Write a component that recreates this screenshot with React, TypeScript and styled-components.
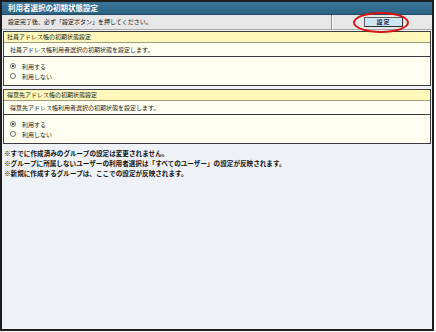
import styled, { createGlobalStyle } from "styled-components";

const GlobalStyle = createGlobalStyle`
  html, body {
    margin: 0;
    padding: 0;
    background: #ffffff;
  }
  body {
    font-family: "Noto Sans CJK JP", "Noto Sans", sans-serif;
  }
`;

const Frame = styled.div`
  box-sizing: border-box;
  width: 434px;
  height: 331px;
  border: 2px solid #1d1d1d;
  background-color: #eef1f5;
  display: flex;
  flex-direction: column;
`;

const TitleBar = styled.div`
  height: 12px;
  line-height: 12px;
  padding-left: 6px;
  background: linear-gradient(#3a7597, #2c6485);
  color: #ffffff;
  font-size: 7.5px;
  font-weight: bold;
  border-bottom: 1px solid #1f4a63;
`;

const NoticeRow = styled.div`
  position: relative;
  display: flex;
  height: 14px;
  background-color: #e7e7e7;
  border-bottom: 1px solid #a8a8a8;
`;

const NoticeText = styled.div`
  flex: 1;
  padding-left: 6px;
  line-height: 14px;
  font-size: 6px;
  color: #111111;
  border-right: 1px solid #8d8d8d;
`;

const ButtonCell = styled.div`
  width: 100px;
  display: flex;
  align-items: center;
  padding-left: 31px;
  box-sizing: border-box;
  border-left: 1px solid #ffffff;
`;

const SetButton = styled.button`
  width: 39px;
  height: 10px;
  padding: 0;
  background-color: #cfe7f3;
  border: 1px solid #2e2e2e;
  border-top-color: #5d5d5d;
  border-left-color: #5d5d5d;
  font-family: inherit;
  font-size: 6px;
  font-weight: bold;
  color: #14264a;
  letter-spacing: 1px;
  line-height: 8px;
`;

const RedRing = styled.div`
  position: absolute;
  left: 351px;
  top: -3px;
  width: 56px;
  height: 21px;
  box-sizing: border-box;
  border: 2px solid #d81414;
  border-radius: 50%;
`;

const Section = styled.div<{ $top: number }>`
  margin: ${(p) => p.$top}px 1px 0 1px;
  border: 1px solid #3c3c3c;
  background-color: #fffff2;
`;

const SectionHeader = styled.div`
  height: 10px;
  line-height: 10px;
  padding-left: 3px;
  background-color: #fff7bc;
  border-bottom: 1px solid #9c9c78;
  font-size: 6px;
  color: #1c1c08;
`;

const Description = styled.div`
  height: 13px;
  line-height: 13px;
  padding-left: 6px;
  border-bottom: 1px solid #3c3c3c;
  font-size: 6px;
  color: #222222;
`;

const Options = styled.div`
  padding: 4px 0 4px 6px;
  display: flex;
  flex-direction: column;
`;

const Option = styled.label`
  display: flex;
  align-items: center;
  gap: 6px;
  height: 10px;
  font-size: 6px;
  color: #222222;
`;

const Radio = styled.span<{ $checked?: boolean }>`
  box-sizing: border-box;
  width: 6px;
  height: 6px;
  border-radius: 50%;
  border: 1px solid #6f6f6f;
  background-color: #ffffff;
  display: flex;
  align-items: center;
  justify-content: center;

  &::after {
    content: "";
    width: 2px;
    height: 2px;
    border-radius: 50%;
    background-color: ${(p) => (p.$checked ? "#111111" : "transparent")};
  }
`;

const Notes = styled.div`
  padding: 4px 0 0 2px;
  display: flex;
  flex-direction: column;
`;

const Note = styled.div`
  height: 10px;
  line-height: 10px;
  font-size: 6.6px;
  font-weight: bold;
  color: #111111;
  white-space: nowrap;
`;

const sections = [
  {
    title: "社員アドレス帳の初期状態設定",
    desc: "社員アドレス帳利用者選択の初期状態を設定します。",
  },
  {
    title: "得意先アドレス帳の初期状態設定",
    desc: "得意先アドレス帳利用者選択の初期状態を設定します。",
  },
];

const notes = [
  "※すでに作成済みのグループの設定は変更されません。",
  "※グループに所属しないユーザーの利用者選択は「すべてのユーザー」の設定が反映されます。",
  "※新規に作成するグループは、ここでの設定が反映されます。",
];

export default function App() {
  return (
    <>
      <GlobalStyle />
      <Frame>
        <TitleBar>利用者選択の初期状態設定</TitleBar>
        <NoticeRow>
          <NoticeText>設定完了後、必ず「設定ボタン」を押してください。</NoticeText>
          <ButtonCell>
            <SetButton>設定</SetButton>
          </ButtonCell>
          <RedRing />
        </NoticeRow>
        {sections.map((s, i) => (
          <Section key={i} $top={i === 0 ? 1 : 3}>
            <SectionHeader>{s.title}</SectionHeader>
            <Description>{s.desc}</Description>
            <Options>
              <Option>
                <Radio $checked />
                利用する
              </Option>
              <Option>
                <Radio />
                利用しない
              </Option>
            </Options>
          </Section>
        ))}
        <Notes>
          {notes.map((n, i) => (
            <Note key={i}>{n}</Note>
          ))}
        </Notes>
      </Frame>
    </>
  );
}
